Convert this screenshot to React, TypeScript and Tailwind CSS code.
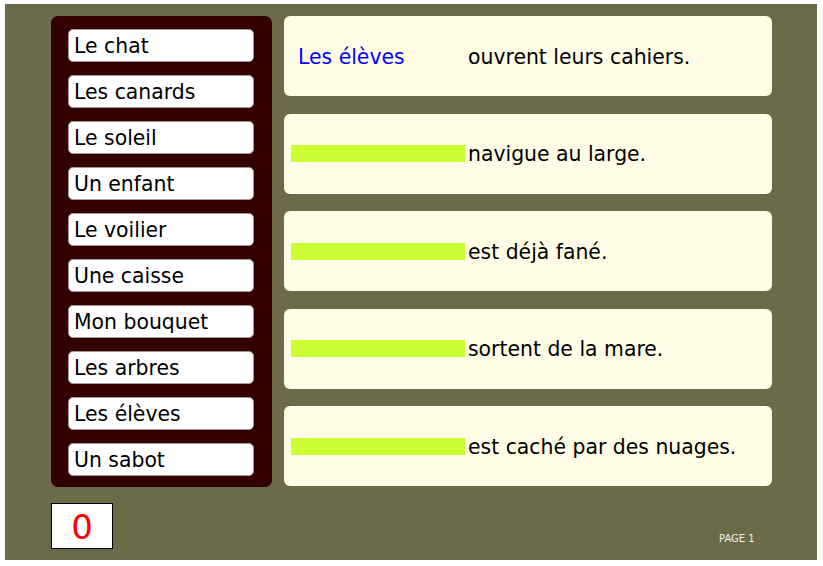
const words = [
  'Le chat',
  'Les canards',
  'Le soleil',
  'Un enfant',
  'Le voilier',
  'Une caisse',
  'Mon bouquet',
  'Les arbres',
  'Les élèves',
  'Un sabot',
];

const sentences = [
  { answer: 'Les élèves', rest: 'ouvrent leurs cahiers.' },
  { answer: '', rest: 'navigue au large.' },
  { answer: '', rest: 'est déjà fané.' },
  { answer: '', rest: 'sortent de la mare.' },
  { answer: '', rest: 'est caché par des nuages.' },
];

export default function App() {
  return (
    <div className="h-[566px] w-[823px] bg-white pl-[5px] pt-[4px] font-['DejaVu_Sans',sans-serif]">
      <div className="relative h-[556px] w-[812px] bg-[#6b6b4a]">
        <div className="flex gap-[12px] pl-[46px] pt-[12px]">
          {/* word bank */}
          <div className="flex h-[471px] w-[221px] flex-col gap-[13px] rounded-[7px] bg-[#330000] pl-[17px] pt-[13px]">
            {words.map((w) => (
              <div
                key={w}
                className="flex h-[33px] w-[186px] items-center rounded-[5px] border border-[#a89999] bg-white pl-[5px] pt-[2px] text-[20.4px] leading-none text-black"
              >
                {w}
              </div>
            ))}
          </div>

          {/* sentences */}
          <div className="flex w-[488px] flex-col gap-[17.5px]">
            {sentences.map((s, i) => (
              <div
                key={i}
                className="flex h-[80px] items-center rounded-[6px] bg-[#fffde6] pl-[7px] text-[20.4px] leading-none text-black"
              >
                {s.answer ? (
                  <span className="w-[177px] pl-[7px] pt-[2px] text-[#0000ff]">{s.answer}</span>
                ) : (
                  <span className="mr-[3px] h-[17px] w-[174px] bg-[#ccff33]" />
                )}
                <span className="pt-[2px]">{s.rest}</span>
              </div>
            ))}
          </div>
        </div>

        <div className="ml-[46px] mt-[16px] flex h-[46px] w-[62px] items-center justify-center border border-black bg-white pt-[1px] text-[34px] leading-none text-[#ff0000]">
          0
        </div>

        <div className="absolute left-[714px] top-[527px] text-[10px] text-[#f0f0f0]">PAGE 1</div>
      </div>
    </div>
  );
}
